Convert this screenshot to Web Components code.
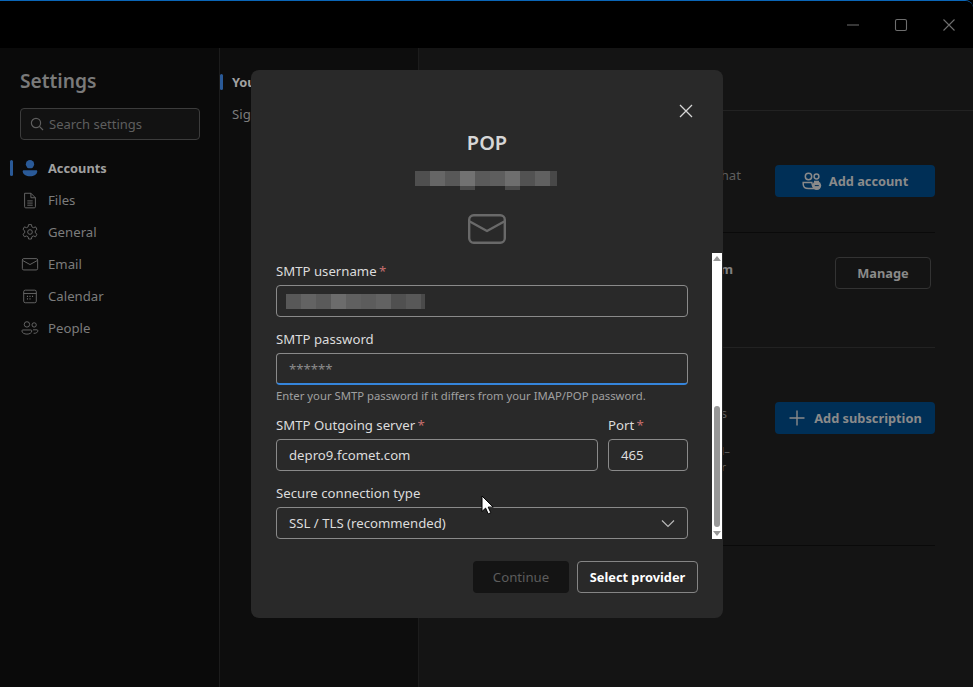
<!DOCTYPE html>
<html lang="en">
<head>
<meta charset="utf-8">
<title>Settings</title>
<style>
  html, body { margin: 0; height: 100%; background: #000; overflow: hidden; }
  body { font-family: "Noto Sans", "Open Sans", sans-serif; font-size: 13.2px; }
</style>
</head>
<body>
<settings-window>
  <settings-sidebar slot="sidebar">
    <nav-item active icon="person">Accounts</nav-item>
    <nav-item icon="file">Files</nav-item>
    <nav-item icon="gear">General</nav-item>
    <nav-item icon="mail">Email</nav-item>
    <nav-item icon="calendar">Calendar</nav-item>
    <nav-item icon="people">People</nav-item>
  </settings-sidebar>
  <settings-subnav slot="subnav"></settings-subnav>
  <settings-content slot="content"></settings-content>
  <pop-dialog slot="dialog">
    <form-field label="SMTP username" required><text-box mosaic></text-box></form-field>
    <form-field label="SMTP password" hint="Enter your SMTP password if it differs from your IMAP/POP password."><text-box focused placeholder="******"></text-box></form-field>
    <field-row>
      <form-field label="SMTP Outgoing server" required style="flex:1"><text-box value="depro9.fcomet.com"></text-box></form-field>
      <form-field label="Port" required style="width:80px"><text-box value="465"></text-box></form-field>
    </field-row>
    <form-field label="Secure connection type"><text-box value="SSL / TLS (recommended)" chevron></text-box></form-field>
  </pop-dialog>
</settings-window>

<script>
// inline icons, all on a 20x20 box with strokes
const ICONS = {
  person: '<circle cx="10" cy="5.8" r="4.6" fill="#2a5a98" stroke="none"/><path d="M2.8 12.6h14.4c.6 0 .8.4.8 1 0 3.6-3.6 5.6-8 5.6s-8-2-8-5.6c0-.6.2-1 .8-1z" fill="#2a5a98" stroke="none"/>',
  file: '<path d="M4 2.5h7l5 5v10a1.2 1.2 0 0 1-1.2 1.2H5.2A1.2 1.2 0 0 1 4 17.5z M11 2.5v5h5 M7 11h6 M7 13.4h6 M7 15.8h6"/>',
  gear: '<path d="M8.4 1.8h3.2l.5 2.5 1.7.9 2.4-.9 1.6 2.8-1.9 1.6v2.2l1.9 1.6-1.6 2.8-2.4-.9-1.7.9-.5 2.5H8.4l-.5-2.5-1.7-.9-2.4.9-1.6-2.8 1.9-1.6V8.7L2.2 7.1l1.6-2.8 2.4.9 1.7-.9z"/><circle cx="10" cy="10" r="2.6"/>',
  mail: '<rect x="1.5" y="4" width="17" height="12.6" rx="1.6"/><path d="M2 6.2 10 10.6l8-4.4"/>',
  calendar: '<rect x="3" y="3.5" width="14" height="14" rx="1.8"/><path d="M3 7.2h14"/><path d="M6.6 10.4h1.2M9.4 10.4h1.2M12.2 10.4h1.2M6.6 13.2h1.2M9.4 13.2h1.2" stroke-width="1.6"/>',
  people: '<circle cx="6.6" cy="6" r="3"/><circle cx="14.6" cy="6.6" r="2.4"/><path d="M2 12.2h9c.6 0 1 .4 1 1 0 2.2-2.4 3.6-5.4 3.6s-5.6-1.4-5.6-3.6c0-.6.4-1 1-1z"/><path d="M13.4 12h4.4c.5 0 .9.4.9.9 0 2-1.8 3.2-4.7 3"/>'
};

class SettingsWindow extends HTMLElement {
  constructor() {
    super();
    this.attachShadow({ mode: 'open' }).innerHTML = `
      <style>
        :host { display: flex; flex-direction: column; width: 973px; height: 687px; position: relative; background: #000; border-top: 1px solid #0a66b8; box-sizing: border-box; border-top-right-radius: 8px; overflow: hidden; }
        .bar { height: 47px; flex: none; background: #000; display: flex; justify-content: flex-end; }
        .ctl { width: 48px; display: flex; align-items: center; justify-content: center; }
        .ctl svg { width: 14px; height: 14px; fill: none; stroke: #6e6e6e; stroke-width: 1.1; }
        .main { flex: 1; display: flex; min-height: 0; }
        .over { position: absolute; left: 251px; top: 69px; }
        .cursor { position: absolute; left: 481px; top: 494px; width: 14px; height: 20px; }
      </style>
      <div class="bar">
        <div class="ctl"><svg viewBox="0 0 14 14"><path d="M1 7h12"/></svg></div>
        <div class="ctl"><svg viewBox="0 0 14 14"><rect x="1.5" y="1.5" width="11" height="11" rx="1.5"/></svg></div>
        <div class="ctl"><svg viewBox="0 0 14 14"><path d="M1.5 1.5l11 11M12.5 1.5l-11 11"/></svg></div>
      </div>
      <div class="main">
        <slot name="sidebar"></slot>
        <slot name="subnav"></slot>
        <slot name="content"></slot>
      </div>
      <div class="over"><slot name="dialog"></slot></div>
      <svg class="cursor" viewBox="0 0 14 20"><path d="M1 1v15.5l3.6-3.4 2.6 5.8 2.6-1.2-2.6-5.6h5z" fill="#fff" stroke="#000" stroke-width="1"/></svg>`;
  }
}

class SettingsSidebar extends HTMLElement {
  constructor() {
    super();
    this.attachShadow({ mode: 'open' }).innerHTML = `
      <style>
        :host { display: block; height: 100%; flex: none; box-sizing: border-box; background: #0a0a0a; border-right: 1px solid #1c1c1c; width: 220px; padding-top: 19px; }
        h1 { margin: 0 0 13px 20px; font-size: 19.2px; line-height: 28px; font-weight: 600; color: #7a7a7a; }
        .search { margin: 0 19px 12px 20px; height: 32px; box-sizing: border-box; border: 1px solid #3c3c3c; border-radius: 4px; background: #121212; display: flex; align-items: center; padding-left: 9px; gap: 5px; color: #5e5e5e; font-size: 13px; }
        .search svg { width: 14px; height: 14px; fill: none; stroke: #5e5e5e; stroke-width: 1.2; }
      </style>
      <h1>Settings</h1>
      <div class="search"><svg viewBox="0 0 14 14"><circle cx="6" cy="6" r="4.6"/><path d="M9.4 9.4l3.6 3.6"/></svg><span>Search settings</span></div>
      <slot></slot>`;
  }
}

class NavItem extends HTMLElement {
  constructor() {
    super();
    this.attachShadow({ mode: 'open' });
  }
  connectedCallback() {
    const active = this.hasAttribute('active');
    this.shadowRoot.innerHTML = `
      <style>
        :host { display: flex; align-items: center; height: 32px; padding-left: 21px; gap: 9px; position: relative; color: ${active ? '#a0a0a0' : '#7c7c7c'}; font-size: ${active ? 12.8 : 13.2}px; font-weight: ${active ? 700 : 400}; }
        svg { width: 18px; height: 18px; fill: none; stroke: #6c6c6c; stroke-width: 1; flex: none; }
        i { position: absolute; left: 10px; top: 8px; width: 3px; height: 16px; border-radius: 2px; background: #2a5a98; }
      </style>
      ${active ? '<i></i>' : ''}
      <svg viewBox="0 0 20 20">${ICONS[this.getAttribute('icon')]}</svg>
      <span><slot></slot></span>`;
  }
}

class SettingsSubnav extends HTMLElement {
  constructor() {
    super();
    this.attachShadow({ mode: 'open' }).innerHTML = `
      <style>
        :host { display: block; width: 199px; flex: none; height: 100%; box-sizing: border-box; background: #0d0d0d; border-right: 1px solid #1c1c1c; padding-top: 18px; font-size: 13.2px; color: #7c7c7c; }
        div { height: 32px; display: flex; align-items: center; padding-left: 12px; position: relative; white-space: nowrap; }
        .on { font-weight: 700; color: #a0a0a0; font-size: 12.8px; }
        .on::before { content: ""; position: absolute; left: 0; top: 8px; width: 3px; height: 16px; background: #2a5a98; border-radius: 2px; }
      </style>
      <div class="on">Your accounts</div>
      <div>Signatures</div>`;
  }
}

class SettingsContent extends HTMLElement {
  constructor() {
    super();
    this.attachShadow({ mode: 'open' }).innerHTML = `
      <style>
        :host { display: block; flex: 1; height: 100%; background: #141414; font-size: 13.2px; color: #5e5e5e; }
        .head { height: 62px; border-bottom: 1px solid #222; }
        .sec { margin-right: 38px; display: flex; border-bottom: 1px solid #0a0a0a; box-sizing: border-box; position: relative; }
        .sec:nth-of-type(3) { border-bottom-color: #222; }
        .txt { position: absolute; left: 0; text-align: right; line-height: 14px; white-space: nowrap; }
        .btn { position: absolute; height: 32px; box-sizing: border-box; border-radius: 4px; display: flex; align-items: center; justify-content: center; gap: 7px; font-weight: 700; font-size: 12.8px; color: #8a8a8a; }
        .pri { right: 0; width: 160px; background: #002f56; }
        .sec2 { right: 4px; width: 96px; border: 1px solid #333; }
        svg { fill: none; stroke: #8a8a8a; }
        .tiny { font-size: 11.4px; }
      </style>
      <div class="head"></div>
      <div class="sec" style="height:122px">
        <span class="txt" style="top:57px;width:322px">that</span>
        <span class="btn pri" style="top:54px"><svg width="20" height="20" viewBox="0 0 20 20" stroke-width="1.5"><circle cx="6.5" cy="5.5" r="3.2"/><circle cx="14.5" cy="5.5" r="2.4"/><path d="M1.2 11.5h8.6c.2 2.6 1 4.6 2.4 6H6.5c-3.2 0-5.3-1.8-5.3-4.6z"/><path d="M12 10.5h5"/><circle cx="14.8" cy="14.6" r="4.4" fill="#8a8a8a" stroke="none"/><path d="M12.8 14.6h4" stroke="#002f56" stroke-width="1"/></svg>Add account</span>
      </div>
      <div class="sec" style="height:115px">
        <span class="txt" style="top:29px;width:314px;font-weight:700;color:#808080">m</span>
        <span class="btn sec2" style="top:24px">Manage</span>
      </div>
      <div class="sec" style="height:198px">
        <span class="txt" style="top:58px;width:308px">s</span>
        <span class="txt tiny" style="top:96px;width:311px">l–</span>
        <span class="txt tiny" style="top:112px;width:307px">r</span>
        <span class="btn pri" style="top:54px;gap:8px"><svg width="18" height="18" viewBox="0 0 18 18" stroke-width="1.4"><path d="M9 1.5v15M1.5 9h15"/></svg>Add subscription</span>
      </div>`;
  }
}

class PopDialog extends HTMLElement {
  constructor() {
    super();
    const cellsA = ['#4f4f4f','#666','#585858','#727272','#5a5a5a','#5e5e5e','#6e6e6e','#525252','#606060'];
    const cellsHtml = cellsA.map((c, i) => `<b style="background:${c}${i === 3 || i === 6 ? ';height:19px;background:linear-gradient(' + c + ' 15px,#4a4a4a 15px)' : ''}"></b>`).join('');
    this.attachShadow({ mode: 'open' }).innerHTML = `
      <style>
        :host { display: flex; flex-direction: column; width: 472px; height: 548px; background: #292929; border-radius: 8px; color: #d6d6d6; box-sizing: border-box; position: relative; }
        .head { height: 183px; flex: none; display: flex; flex-direction: column; align-items: center; box-sizing: border-box; padding: 59px 0 0 0; }
        h2 { margin: 0; font-size: 20px; line-height: 28px; font-weight: 600; color: #d6d6d6; }
        .mosaic { display: flex; align-items: flex-start; height: 19px; margin-top: 14px; margin-left: -2px; }
        .mosaic b { width: 15px; height: 15px; display: block; }
        .mosaic b:last-child { width: 7px; background: #484848; }
        .mail { margin-top: 24px; width: 38px; height: 30px; fill: none; stroke: #696969; stroke-width: 2.4; stroke-linejoin: round; }
        .close { position: absolute; left: 428px; top: 34px; width: 14px; height: 14px; fill: none; stroke: #d6d6d6; stroke-width: 1.3; }
        .body { height: 286px; flex: none; display: flex; gap: 24px; padding-left: 25px; }
        .form { width: 412px; display: flex; flex-direction: column; justify-content: flex-end; }
        .track { width: 10px; background: #fff; position: relative; }
        .track i { position: absolute; left: 2px; top: 153px; width: 6px; height: 121px; background: #979797; border-radius: 3px; }
        .track svg { position: absolute; left: 1px; width: 8px; height: 5px; fill: #979797; }
        .foot { display: flex; justify-content: flex-end; gap: 8px; margin-top: 22px; padding-right: 25px; }
        button { height: 32px; box-sizing: border-box; border-radius: 4px; font: 700 12.8px "Noto Sans", sans-serif; padding: 0; }
        .off { width: 96px; background: #141414; color: #5c5c5c; border: 0; font-weight: 400; font-size: 13.2px; }
        .sel { width: 121px; background: #292929; color: #fff; border: 1px solid #858585; }
      </style>
      <svg class="close" viewBox="0 0 14 14"><path d="M1 1l12 12M13 1L1 13"/></svg>
      <div class="head">
        <h2>POP</h2>
        <div class="mosaic">${cellsHtml}<b></b></div>
        <svg class="mail" viewBox="0 0 38 30"><rect x="1.2" y="1.2" width="35.6" height="27.6" rx="4.5"/><path d="M1.8 7.5 19 17l17.2-9.5"/></svg>
      </div>
      <div class="body">
        <div class="form"><slot></slot></div>
        <div class="track">
          <svg style="top:3px" viewBox="0 0 8 5"><path d="M4 0l4 5H0z"/></svg>
          <i></i>
          <svg style="bottom:3px" viewBox="0 0 8 5"><path d="M0 0h8L4 5z"/></svg>
        </div>
      </div>
      <div class="foot">
        <button class="off">Continue</button>
        <button class="sel">Select provider</button>
      </div>`;
  }
}

class FormField extends HTMLElement {
  constructor() {
    super();
    this.attachShadow({ mode: 'open' });
  }
  connectedCallback() {
    const hint = this.getAttribute('hint');
    this.shadowRoot.innerHTML = `
      <style>
        :host { display: block; min-width: 0; color: #dcdcdc; }
        label { display: block; box-sizing: border-box; height: 36px; padding-top: 13px; line-height: 18px; font-size: 13.2px; white-space: nowrap; }
        em { font-style: normal; color: #c56f6f; margin-left: -1px; }
        p { margin: 3px 0 0; font-size: 11.3px; line-height: 15px; color: #a0a0a0; white-space: nowrap; }
      </style>
      <label>${this.getAttribute('label')}${this.hasAttribute('required') ? ' <em>*</em>' : ''}</label>
      <slot></slot>
      ${hint ? `<p>${hint}</p>` : ''}`;
  }
}

class FieldRow extends HTMLElement {
  constructor() {
    super();
    this.attachShadow({ mode: 'open' }).innerHTML = `
      <style>:host { display: flex; gap: 10px; }</style>
      <slot></slot>`;
  }
}

class TextBox extends HTMLElement {
  constructor() {
    super();
    this.attachShadow({ mode: 'open' });
  }
  connectedCallback() {
    const focused = this.hasAttribute('focused');
    const mosaic = ['#585858','#636363','#5a5a5a','#6c6c6c','#606060','#5c5c5c','#626262','#505050','#585858'];
    const ph = this.getAttribute('placeholder');
    this.shadowRoot.innerHTML = `
      <style>
        :host { display: flex; align-items: center; height: 32px; box-sizing: border-box; border: 1px solid #8a8a8a; ${focused ? 'border-bottom: 2px solid #3585dc;' : ''} border-radius: 4px; padding: 0 12px; font-size: 13.2px; color: #dcdcdc; position: relative; }
        .ph { color: #8c8c8c; }
        .mos { display: flex; margin-left: -3px; }
        .mos b { width: 15px; height: 15px; display: block; }
        svg { position: absolute; right: 12px; top: 11px; width: 14px; height: 9px; fill: none; stroke: #b8b8b8; stroke-width: 1.2; }
      </style>
      ${this.hasAttribute('mosaic') ? `<div class="mos">${mosaic.map(c => `<b style="background:${c}"></b>`).join('')}<b style="width:4px;background:#4a4a4a"></b></div>` : ''}
      ${ph ? `<span class="ph">${ph}</span>` : `<span>${this.getAttribute('value') || ''}</span>`}
      ${this.hasAttribute('chevron') ? '<svg viewBox="0 0 14 9"><path d="M1 1.5l6 6 6-6"/></svg>' : ''}`;
  }
}

customElements.define('settings-window', SettingsWindow);
customElements.define('settings-sidebar', SettingsSidebar);
customElements.define('nav-item', NavItem);
customElements.define('settings-subnav', SettingsSubnav);
customElements.define('settings-content', SettingsContent);
customElements.define('pop-dialog', PopDialog);
customElements.define('form-field', FormField);
customElements.define('field-row', FieldRow);
customElements.define('text-box', TextBox);
</script>
</body>
</html>
